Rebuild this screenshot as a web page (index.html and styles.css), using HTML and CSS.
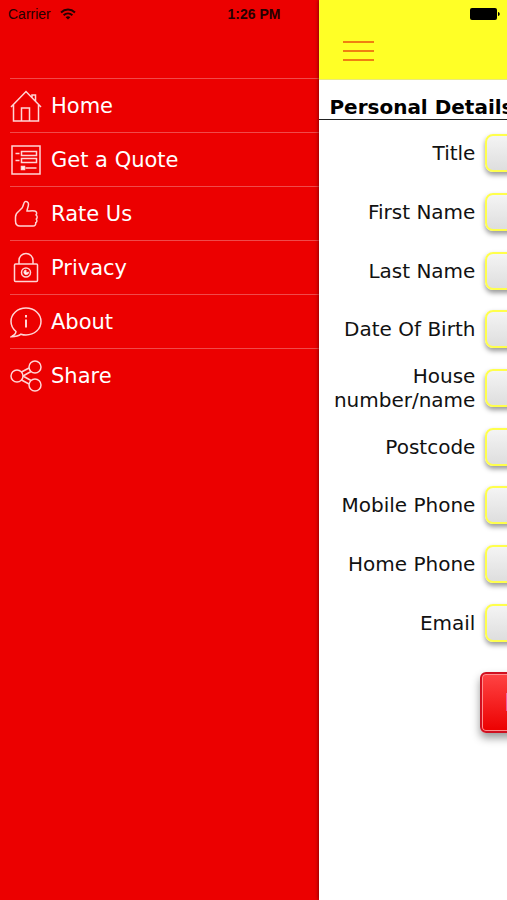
FILE: index.html
```html
<!DOCTYPE html>
<html lang="en">
<head>
  <meta charset="UTF-8" />
  <meta name="viewport" content="width=device-width, initial-scale=1" />
  <title>Get a Quote</title>
  <link rel="stylesheet" href="styles.css">
</head>
<body>

  <div class="status-bar">
    <div class="carrier">
      <span>Carrier</span>
      <svg width="16" height="12" viewBox="0 0 16 12" fill="none" stroke="#250000" stroke-width="2">
        <path d="M1 4.400C5 .6 11 .6 15 4.400" />
        <path d="M3.600 7.200c2.600-2.300 6.200-2.300 8.800 0" />
        <path d="M8 11.500L5.600 9.200c1.400-1.200 3.400-1.200 4.800 0z" fill="#250000" stroke="none" />
      </svg>
    </div>
    <span class="clock">1:26 PM</span>
    <svg class="battery" width="30" height="12" viewBox="0 0 30 12">
      <rect x="0" y="0" width="27" height="12" rx="2" />
      <path d="M28 4c2.300.5 2.300 3.500 0 4z" />
    </svg>
  </div>

  <nav class="sidebar">
    <ul>
      <li><a href="#home">
        <svg class="icon" viewBox="0 0 32 32">
          <path d="M1 17L16 1.500 31 17M3.500 15v16h25V15M11.500 31V18h8v13M22 7.500V5h3.500v6" />
        </svg>
        Home</a></li>
      <li><a href="#quote">
        <svg class="icon" viewBox="0 0 32 32">
          <path d="M2 2h28v28H2zM11.500 7.500h15v4h-15zM11.500 14.500h15v4h-15zM5.500 9.500h4M5.500 16.500h4M15.500 24h11" />
          <rect x="11.500" y="22.500" width="3" height="3" fill="#fff" />
        </svg>
        Get a Quote</a></li>
      <li><a href="#rate">
        <svg class="icon" viewBox="0 0 32 32">
          <path d="M17 13c2 0 6-.5 8 0 2 .6 2 3 1 4 1.500 1 1.500 3 .3 4 1 1.200.7 3-.6 3.700.3 2-.7 3.300-2.700 3.300H10c-3 0-4.500-2-4.500-5v-4c0-3 1.500-4.500 3.500-6l3-3c1.500-2 1.500-5.500 3-6.300 1.400-.8 3.500.3 3.500 2.300 0 3-1.500 5-1.500 7z" />
        </svg>
        Rate Us</a></li>
      <li><a href="#privacy">
        <svg class="icon" viewBox="0 0 32 32">
          <rect x="4.500" y="12" width="23" height="17.500" rx="1" />
          <path d="M9 12V8.500a7 7 0 0 1 14 0V12" />
          <circle cx="16" cy="20.500" r="4.500" />
          <path d="M16 18v3l2.500-1A2.300 2.300 0 1 1 16 18z" fill="#fff" stroke-width="1" />
        </svg>
        Privacy</a></li>
      <li><a href="#about">
        <svg class="icon" viewBox="0 0 32 32">
          <path d="M6 25.500C3 23 1 19.500 1 15.500 1 8 7.500 2 16 2s15 6 15 13.500S24.500 29 16 29c-2 0-3.600-.3-5-.8-2.500 2-5.500 2.500-9.500 2.500C3.500 29.500 6 28 6 25.500z" />
          <path d="M16 13.500v8M16 9v2.500" stroke-width="2" />
        </svg>
        About</a></li>
      <li><a href="#share">
        <svg class="icon" viewBox="0 0 32 32">
          <circle cx="7" cy="16" r="6" />
          <circle cx="25" cy="7" r="6" />
          <circle cx="25" cy="25" r="6" />
          <path d="M11.500 12l7.500-4M13 16l8-4.500M13 16l8 4.500M11.500 20l7.500 4" />
        </svg>
        Share</a></li>
    </ul>
  </nav>

  <main class="page">
    <header class="topbar">
      <button class="menu-btn" aria-label="Menu"><span></span><span></span><span></span></button>
    </header>
    <h1>Personal Details</h1>
    <form>
      <div class="fields">
        <label for="title">Title</label><input id="title" type="text">
        <label for="first-name">First Name</label><input id="first-name" type="text">
        <label for="last-name">Last Name</label><input id="last-name" type="text">
        <label for="dob">Date Of Birth</label><input id="dob" type="text">
        <label for="house">House number/name</label><input id="house" type="text">
        <label for="postcode">Postcode</label><input id="postcode" type="text">
        <label for="mobile">Mobile Phone</label><input id="mobile" type="tel">
        <label for="phone">Home Phone</label><input id="phone" type="tel">
        <label for="email">Email</label><input id="email" type="email">
      </div>
      <button class="next-btn" type="button">Next</button>
    </form>
  </main>

</body>
</html>
```
FILE: styles.css
```css
* {
  margin: 0;
  padding: 0;
  box-sizing: border-box;
}

body {
  position: relative;
  display: flex;
  min-height: 100vh;
  overflow: hidden;
  background: #ec0000;
  font-family: "DejaVu Sans", Verdana, sans-serif;
  font-size: 20px;
  line-height: 24px;
}

/* status bar lies over both panes */
.status-bar {
  position: absolute;
  top: 0;
  left: 0;
  z-index: 2;
  width: 100%;
  height: 27px;
  padding: 0 7px 0 8px;
  display: grid;
  grid-template-columns: 1fr auto 1fr;
  align-items: center;
  color: #250000;
  font-family: "Liberation Sans", Arial, sans-serif;
  font-size: 14px;
}

.carrier {
  display: flex;
  align-items: center;
  gap: 9px;
}

.clock {
  font-weight: bold;
}

.battery {
  justify-self: end;
  fill: #000;
}

.sidebar {
  flex: none;
  width: 63%;
  padding: 78px 0 0 10px;
  background: #ec0000;
}

.sidebar ul {
  list-style: none;
}

.sidebar li {
  border-top: 1px solid #f04a4a;
}

.sidebar a {
  display: flex;
  align-items: center;
  gap: 9px;
  height: 53px;
  color: #fff;
  font-size: 21px;
  text-decoration: none;
}

.icon {
  width: 32px;
  height: 32px;
  fill: none;
  stroke: #ffd5d5;
  stroke-width: 1.5;
}

.page {
  flex: none;
  width: 100%;
  background: #fff;
  box-shadow: 0 0 4px #600000;
}

.topbar {
  height: 80px;
  padding: 41px 0 0 24px;
  background: #ffff26;
  border-bottom: 1px solid #e8e880;
}

.menu-btn {
  display: flex;
  flex-direction: column;
  gap: 7px;
  width: 31px;
  border: none;
  background: none;
}

.menu-btn span {
  width: 31px;
  height: 2px;
  background: #f08010;
}

h1 {
  padding: 15px 10px 0;
  border-bottom: 1px solid #222;
  font-size: 20px;
  line-height: 24px;
}

.fields {
  display: grid;
  grid-template-columns: 146px 1fr;
  grid-auto-rows: 1fr;
  column-gap: 10px;
  align-items: center;
  min-height: 528px;
  padding: 0 10px;
  margin-top: 4px;
  color: #111;
  text-align: right;
}

.fields input {
  width: 100%;
  height: 38px;
  padding: 0 8px;
  border: 2px solid #ffff4c;
  border-radius: 8px;
  background: linear-gradient(#f4f4f4, #dedede);
  box-shadow: 0 3px 5px #999;
  font-size: 20px;
}

.next-btn {
  display: block;
  margin: 20px auto 0 161px;
  height: 61px;
  padding: 0 22px;
  border: 2px solid #d01020;
  border-radius: 6px;
  background: linear-gradient(#ff4444, #ec0000);
  box-shadow: inset 0 0 0 1px #ff9090, 0 5px 9px #999;
  color: #fff;
  font-family: inherit;
  font-size: 24px;
}
```
